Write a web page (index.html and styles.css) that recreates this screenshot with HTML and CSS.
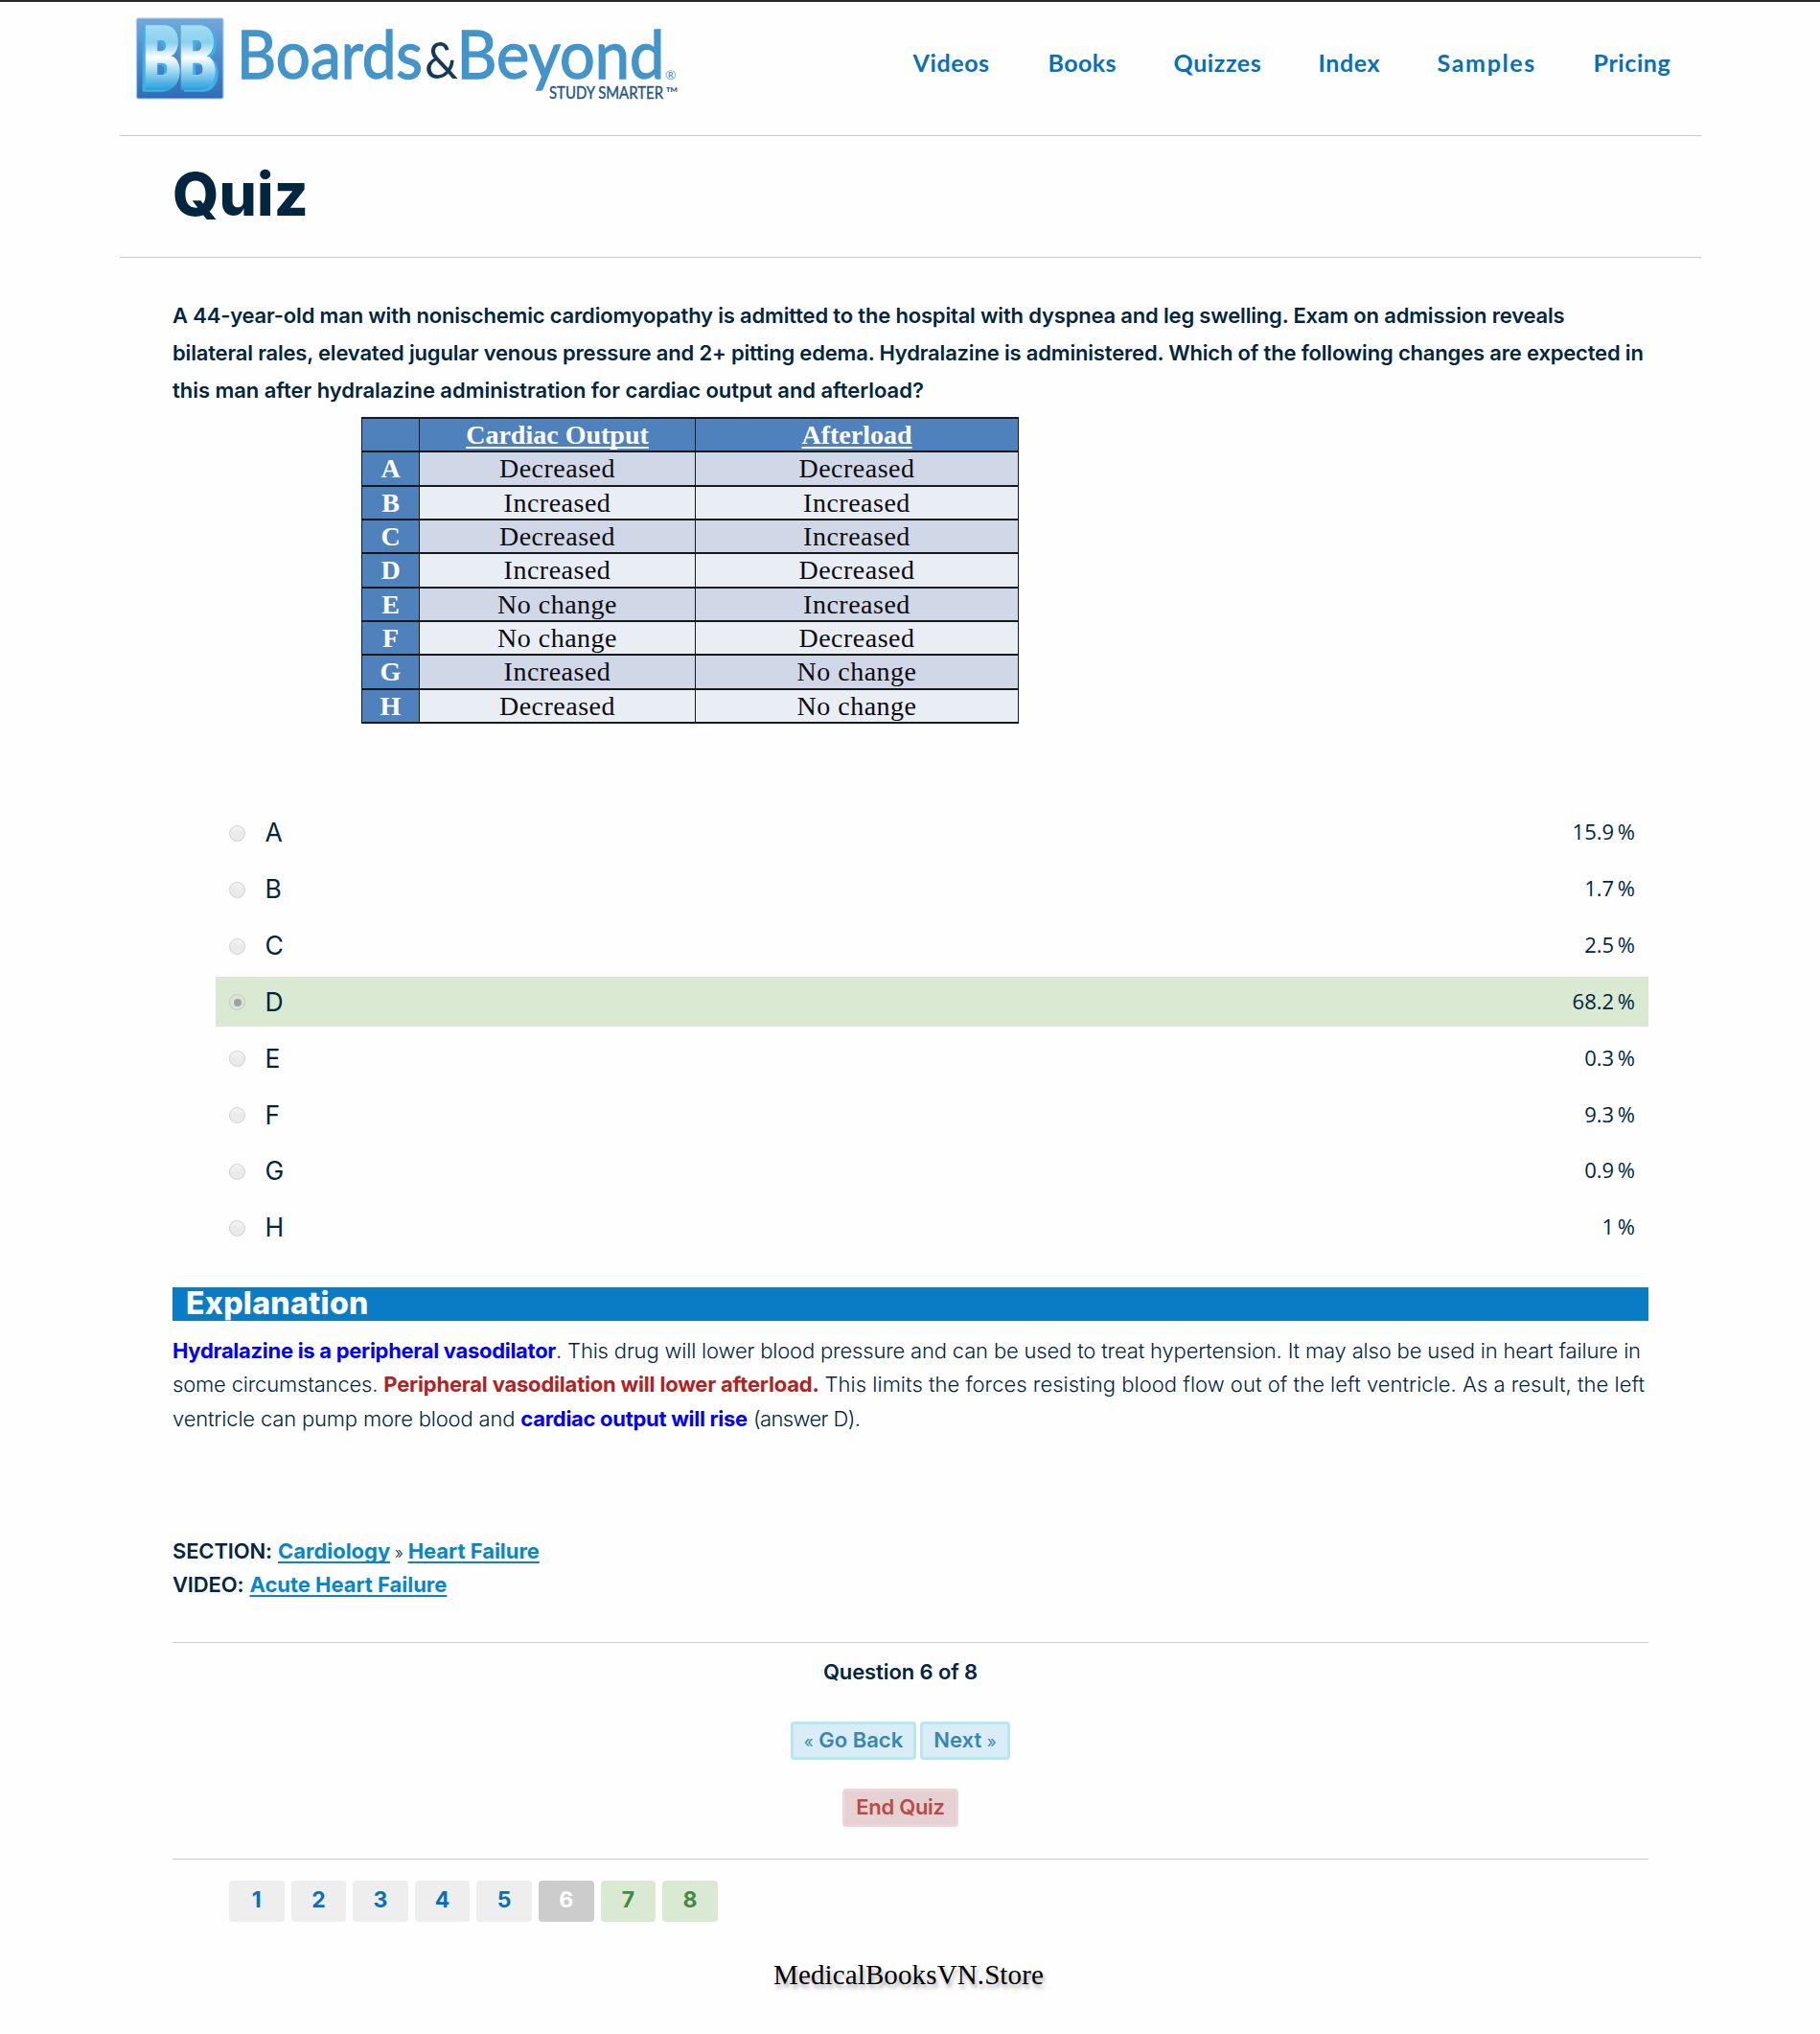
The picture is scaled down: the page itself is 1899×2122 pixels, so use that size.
FILE: index.html
```
<!DOCTYPE html>
<html lang="en">
<head>
<meta charset="utf-8">
<title>Quiz - Boards &amp; Beyond</title>
<link rel="stylesheet" href="styles.css">
</head>
<body>
<div class="page">
  <header class="header">
    <svg class="logo" viewBox="125 2 600 120" width="600" height="120" role="img" aria-label="Boards &amp; Beyond">
      <defs>
        <linearGradient id="tile" x1="0" y1="0" x2="0" y2="1">
          <stop offset="0" stop-color="#71a9db"/><stop offset=".5" stop-color="#4a8aca"/><stop offset="1" stop-color="#2e6db5"/>
        </linearGradient>
        <linearGradient id="face" gradientUnits="userSpaceOnUse" x1="0" y1="25" x2="0" y2="95">
          <stop offset="0" stop-color="#a5def2"/><stop offset=".28" stop-color="#8ad0ee"/><stop offset=".5" stop-color="#ffffff"/><stop offset=".62" stop-color="#c5e8f7"/><stop offset="1" stop-color="#1b9bdc"/>
        </linearGradient>
      </defs>
      <rect x="142.5" y="19" width="90.5" height="84" rx="2" fill="url(#tile)" stroke="#a9cdec" stroke-width="1.2"/>
      <g font-family="Inter, sans-serif" font-weight="900" font-size="91" stroke-linejoin="round" fill="url(#face)" stroke="url(#face)" stroke-width="1.5">
        <text class="side-left" x="149.500" y="92.500" textLength="39" lengthAdjust="spacingAndGlyphs">B</text>
        <text class="side-right" x="186.500" y="92.500" textLength="39" lengthAdjust="spacingAndGlyphs">B</text>
      </g>
      <g font-family="Lato, sans-serif" fill="#4294ca">
        <text x="247" y="81.500" font-size="69" textLength="194" lengthAdjust="spacingAndGlyphs" stroke="#4294ca" stroke-width="1.4">Boards</text>
        <text x="476.500" y="81.500" font-size="69" textLength="217" lengthAdjust="spacingAndGlyphs" stroke="#4294ca" stroke-width="1.4">Beyond</text>
        <text x="443" y="81.500" font-size="52" textLength="35" lengthAdjust="spacingAndGlyphs" fill="#15395a">&amp;</text>
        <text x="694" y="83" font-size="14">®</text>
        <text x="573" y="103" font-size="18" textLength="119" lengthAdjust="spacingAndGlyphs" fill="#23557d" stroke="#23557d" stroke-width=".4">STUDY SMARTER</text>
        <text x="694.500" y="103" font-size="16" fill="#23557d" textLength="13" lengthAdjust="spacingAndGlyphs">™</text>
      </g>
    </svg>
    <nav class="nav">
      <a>Videos</a><a class="tight">Books</a><a>Quizzes</a><a>Index</a><a class="wide">Samples</a><a>Pricing</a>
    </nav>
  </header>
  <div class="title"><h1>Quiz</h1></div>
  <main class="content">
    <p class="question">A 44-year-old man with nonischemic cardiomyopathy is admitted to the hospital with dyspnea and leg swelling. Exam on admission reveals<br>bilateral rales, elevated jugular venous pressure and 2+ pitting edema. Hydralazine is administered. Which of the following changes are expected in<br><span class="last">this man after hydralazine administration for cardiac output and afterload?</span></p>

    <div class="grid">
      <b></b><b><u>Cardiac Output</u></b><b><u>Afterload</u></b>
      <b>A</b><i>Decreased</i><i>Decreased</i>
      <b>B</b><i class="alt">Increased</i><i class="alt">Increased</i>
      <b>C</b><i>Decreased</i><i>Increased</i>
      <b>D</b><i class="alt">Increased</i><i class="alt">Decreased</i>
      <b>E</b><i>No change</i><i>Increased</i>
      <b>F</b><i class="alt">No change</i><i class="alt">Decreased</i>
      <b>G</b><i>Increased</i><i>No change</i>
      <b>H</b><i class="alt">Decreased</i><i class="alt">No change</i>
    </div>

    <ul class="answers">
      <li><span class="radio"></span><span class="letter">A</span><span class="pct">15.9 %</span></li>
      <li><span class="radio"></span><span class="letter">B</span><span class="pct">1.7 %</span></li>
      <li><span class="radio"></span><span class="letter">C</span><span class="pct">2.5 %</span></li>
      <li class="correct"><span class="radio on"></span><span class="letter">D</span><span class="pct">68.2 %</span></li>
      <li><span class="radio"></span><span class="letter">E</span><span class="pct">0.3 %</span></li>
      <li><span class="radio"></span><span class="letter">F</span><span class="pct">9.3 %</span></li>
      <li><span class="radio"></span><span class="letter">G</span><span class="pct">0.9 %</span></li>
      <li><span class="radio"></span><span class="letter">H</span><span class="pct">1 %</span></li>
    </ul>

    <h2 class="bar">Explanation</h2>
    <p class="explain"><strong class="blue">Hydralazine is a peripheral vasodilator</strong>. This drug will lower blood pressure and can be used to treat hypertension. It may also be used in heart failure in<br>some circumstances. <strong class="red">Peripheral vasodilation will lower afterload.</strong> <span class="loose">This limits the forces resisting blood flow out of the left ventricle. As a result, the left</span><br>ventricle can pump more blood and <strong class="blue">cardiac output will rise</strong> <span class="snug">(answer D).</span></p>

    <div class="meta">
      <p><span class="label">SECTION:</span> <a>Cardiology</a> <span class="sep">»</span> <a>Heart Failure</a></p>
      <p><span class="label">VIDEO:</span> <a>Acute Heart Failure</a></p>
    </div>

    <section class="controls">
      <p class="count">Question 6 of 8</p>
      <div class="row"><a class="btn back"><small>«</small> Go Back</a><a class="btn next">Next <small>»</small></a></div>
      <a class="btn end">End Quiz</a>
    </section>

    <div class="pages">
      <a>1</a><a>2</a><a>3</a><a>4</a><a>5</a><a class="current">6</a><a class="done">7</a><a class="done">8</a>
    </div>
  </main>
  <footer class="store">MedicalBooksVN.Store</footer>
</div>
</body>
</html>
```
FILE: styles.css
```
* { box-sizing: border-box; }
body { margin: 0; background: #fefefe; color: #02263f; font-family: Inter, sans-serif; font-size: 22px; border-top: 2px solid #2b292b; }
p, h1, h2, ul { margin: 0; padding: 0; }
.page { width: 1650px; margin-left: 125px; }

.header { height: 140px; display: flex; justify-content: space-between; border-bottom: 1px solid #c9c9c9; }
.logo { display: block; }
.side-left { filter: drop-shadow(-3px 2px 0 #3fb0e4); }
.side-right { filter: drop-shadow(3px 2px 0 #3fb0e4); }
.nav { display: grid; grid-template-columns: 141px 131px 151px 124px 163px 112px; padding-top: 38px; font: 700 25px/50px Lato, sans-serif; letter-spacing: .6px; color: #0870b8; }
.nav a { margin-left: -.5px; }
.nav .tight { letter-spacing: .4px; }
.nav .wide { letter-spacing: 1.65px; }
.title { height: 127px; padding: 0 0 4px 55px; display: flex; align-items: center; border-bottom: 1px solid #c9c9c9; }
h1 { font-size: 62px; font-weight: 800; line-height: 76px; letter-spacing: .1px; }

.content { padding: 41px 55px 0; }
.question { font-weight: 600; line-height: 39px; letter-spacing: -.177px; white-space: nowrap; }
.question .last { letter-spacing: -.04px; }

.grid { width: 686px; height: 320px; margin: 8px 0 0 197px; padding: 2px 1px; display: grid; grid-template-columns: 59px 287px 1fr; grid-template-rows: repeat(9, minmax(0, 1fr)); gap: 2px 1px; background: #16191c; font: 28px/34px "Liberation Serif", serif; text-align: center; color: #0c0c10; }
.grid b { background: #4f81bd; color: #fff; }
.grid u { text-decoration-thickness: 2px; text-underline-offset: 3px; text-decoration-skip-ink: none; }
.grid i { font-style: normal; background: #d0d7e7; letter-spacing: .5px; }
.grid .alt { background: #e9edf4; }

.answers { margin: 87.4px 0 0 45px; list-style: none; display: flex; flex-direction: column; gap: 6.85px; }
.answers li { height: 52px; display: flex; align-items: center; padding: 0 14px; }
.answers .correct { background: #dae9d2; }
.radio { width: 17px; height: 17px; margin-top: 2px; border: 1px solid #d0d0d0; border-radius: 50%; background: linear-gradient(#f5f5f5, #eaeaea 50%); display: flex; align-items: center; justify-content: center; }
.radio.on { background: #dce3d8; border-color: #c2cabd; }
.radio.on::after { content: ""; width: 8px; height: 8px; border-radius: 50%; background: #9ca399; }
.letter { margin-left: 20.5px; font-size: 26.5px; line-height: 52px; }
.pct { margin-left: auto; font: 400 22px/48px "Open Sans", sans-serif; padding-bottom: 2px; letter-spacing: 0; word-spacing: -2px; }

.bar { height: 35px; margin-top: 36.6px; padding-left: 14px; background: #097cc5; color: #fff; font-size: 32px; font-weight: 800; line-height: 33px; letter-spacing: .3px; }
.explain { margin-top: 14.4px; font-weight: 300; line-height: 35.2px; letter-spacing: -.177px; white-space: nowrap; }
.explain strong { font-weight: 700; letter-spacing: -.29px; }
.explain .red { color: #b22222; letter-spacing: -.2px; }
.blue { color: #00f; }
.loose { letter-spacing: .02px; }
.snug { letter-spacing: -.6px; }

.meta { height: 70px; margin-top: 103.3px; }
.meta p { height: 35px; line-height: 35px; }
.label { font-weight: 600; letter-spacing: -.15px; }
.meta a { font-weight: 700; color: #0786ca; letter-spacing: -.03px; text-decoration: underline 2px; text-underline-offset: 3px; text-decoration-skip-ink: none; }
.sep { font-size: 17px; font-weight: 300; margin: 0 -1.5px; }

.controls { height: 227px; margin-top: 42px; padding: 12px 21px 0 0; border: solid #ccc; border-width: 1px 0; display: flex; flex-direction: column; align-items: center; font-weight: 600; }
.count { line-height: 36px; letter-spacing: -.1px; }
.row { display: flex; gap: 4px; margin: 34px 0 30px; }
.btn { height: 40px; border: 3px solid #b8e7f0; border-radius: 4px; background: #d9edf7; color: #3a87ad; text-align: center; line-height: 33px; white-space: nowrap; }
.btn small { font-size: 17px; font-weight: 400; }
.back { width: 131px; }
.next { width: 94px; }
.end { width: 121px; border-color: #eed3d7; background: #e6d1d2; color: #b94a48; letter-spacing: -.3px; }

.pages { display: flex; gap: 7px; margin: 22px 0 0 59px; }
.pages a { width: 57.6px; height: 43px; border-radius: 4px; background: #eee; color: #0870b8; font-weight: 700; font-size: 23px; line-height: 41px; text-align: center; }
.pages .current { background: #ccc; color: #fff; }
.pages .done { background: #dae9d2; color: #468847; }

.store { margin-top: 35px; padding-right: 4px; text-align: center; font: 29px/40px "Liberation Serif", serif; letter-spacing: .12px; color: #000; text-shadow: 2px 4px 4px rgba(0,0,0,.35); }
```
